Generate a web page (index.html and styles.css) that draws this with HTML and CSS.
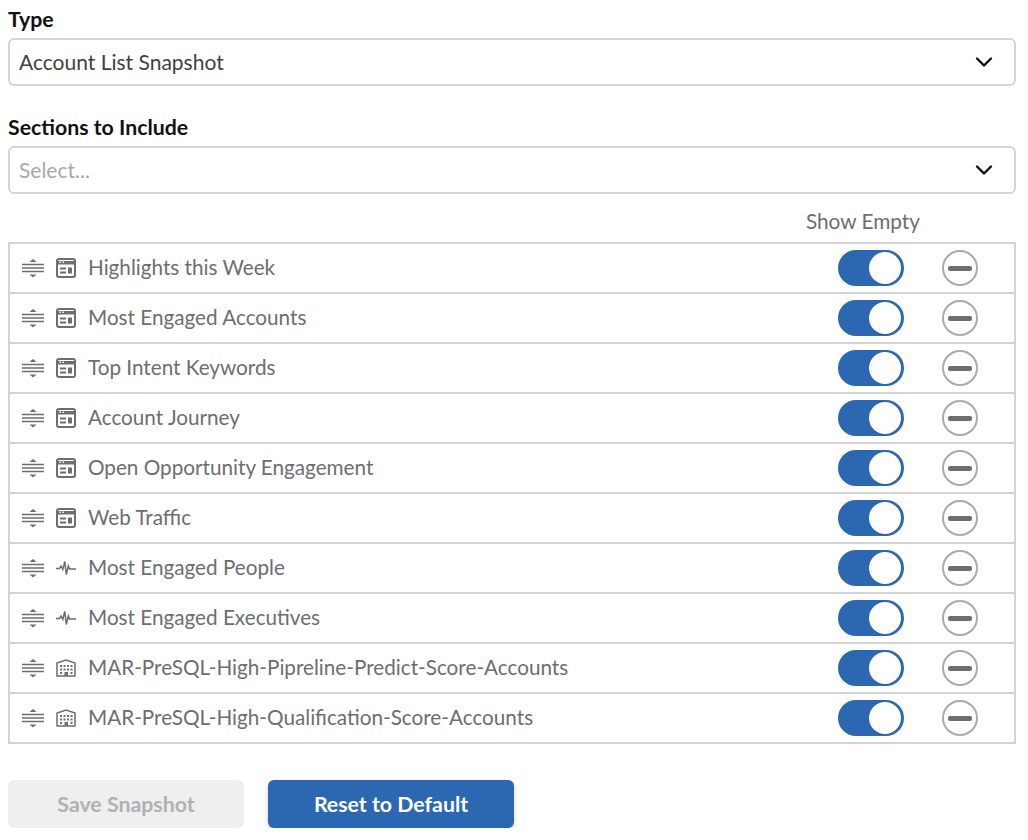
FILE: index.html
```html
<!DOCTYPE html>
<html lang="en">
<head>
  <meta charset="UTF-8">
  <title>Snapshot Settings</title>
  <link rel="stylesheet" href="styles.css">
</head>
<body>
<svg class="sprites" width="0" height="0">
  <symbol id="grip" viewBox="0 0 22 20">
    <path d="M11 1l3.500 3h-7z" fill="#6d6e71"/>
    <path d="M11 19.500l3.500-3h-7z" fill="#6d6e71"/>
    <path d="M0 6.500h22M0 10h22M0 13.500h22" stroke="#6d6e71" stroke-width="1.500" fill="none"/>
  </symbol>
  <symbol id="report" viewBox="0 0 20 20">
    <rect x="1" y="1" width="18" height="18" rx="2" fill="none" stroke="#6d6e71" stroke-width="2"/>
    <path d="M1 3h18v3.500H1z" fill="#6d6e71"/>
    <path d="M3.500 4.200h1.500M6.500 4.200h1.500" stroke="#fff" stroke-width="1.400"/>
    <path d="M4 9.500h6v2H4zM4 13.500h6v2H4zM12 9.500h4v6h-4z" fill="#6d6e71"/>
  </symbol>
  <symbol id="pulse" viewBox="0 0 20 16">
    <path d="M0 8.500h3.500l1.500-2.500 1.800 3.500 2-8 1.500 13 2-8.500 1.200 3h6.500" fill="none" stroke="#6d6e71" stroke-width="1.500"/>
  </symbol>
  <symbol id="building" viewBox="0 0 20 18">
    <path d="M1 17V4l9-3 9 3v13z" fill="none" stroke="#6d6e71" stroke-width="1.500"/>
    <path d="M4 6h2v2H4zM7.500 6h2v2h-2zM11 6h2v2h-2zM14.500 6h2v2h-2zM4 9.500h2v2H4zM7.500 9.500h2v2h-2zM11 9.500h2v2h-2zM14.500 9.500h2v2h-2zM4 13h2v2H4zM14.500 13h2v2h-2zM8.500 13h3.500v4H8.500z" fill="#6d6e71"/>
  </symbol>
  <symbol id="chevron" viewBox="0 0 18 12">
    <path d="M2 2.500l7 7 7-7" fill="none" stroke="#111" stroke-width="2.400" stroke-linecap="round" stroke-linejoin="round"/>
  </symbol>
</svg>

<div class="form">
  <label class="field-label">Type</label>
  <div class="select">
    <span class="select-value">Account List Snapshot</span>
    <svg class="chevron"><use href="#chevron"/></svg>
  </div>

  <label class="field-label second">Sections to Include</label>
  <div class="select">
    <span class="select-value placeholder">Select...</span>
    <svg class="chevron"><use href="#chevron"/></svg>
  </div>

  <div class="list-head"><span class="show-empty">Show Empty</span></div>

  <div class="section-list">
    <div class="section-row">
      <svg class="grip"><use href="#grip"/></svg>
      <svg class="type-icon"><use href="#report"/></svg>
      <span class="section-name">Highlights this Week</span>
      <span class="toggle"><span class="knob"></span></span>
      <span class="remove"><span class="remove-bar"></span></span>
    </div>
    <div class="section-row">
      <svg class="grip"><use href="#grip"/></svg>
      <svg class="type-icon"><use href="#report"/></svg>
      <span class="section-name">Most Engaged Accounts</span>
      <span class="toggle"><span class="knob"></span></span>
      <span class="remove"><span class="remove-bar"></span></span>
    </div>
    <div class="section-row">
      <svg class="grip"><use href="#grip"/></svg>
      <svg class="type-icon"><use href="#report"/></svg>
      <span class="section-name">Top Intent Keywords</span>
      <span class="toggle"><span class="knob"></span></span>
      <span class="remove"><span class="remove-bar"></span></span>
    </div>
    <div class="section-row">
      <svg class="grip"><use href="#grip"/></svg>
      <svg class="type-icon"><use href="#report"/></svg>
      <span class="section-name">Account Journey</span>
      <span class="toggle"><span class="knob"></span></span>
      <span class="remove"><span class="remove-bar"></span></span>
    </div>
    <div class="section-row">
      <svg class="grip"><use href="#grip"/></svg>
      <svg class="type-icon"><use href="#report"/></svg>
      <span class="section-name">Open Opportunity Engagement</span>
      <span class="toggle"><span class="knob"></span></span>
      <span class="remove"><span class="remove-bar"></span></span>
    </div>
    <div class="section-row">
      <svg class="grip"><use href="#grip"/></svg>
      <svg class="type-icon"><use href="#report"/></svg>
      <span class="section-name">Web Traffic</span>
      <span class="toggle"><span class="knob"></span></span>
      <span class="remove"><span class="remove-bar"></span></span>
    </div>
    <div class="section-row">
      <svg class="grip"><use href="#grip"/></svg>
      <svg class="type-icon"><use href="#pulse"/></svg>
      <span class="section-name">Most Engaged People</span>
      <span class="toggle"><span class="knob"></span></span>
      <span class="remove"><span class="remove-bar"></span></span>
    </div>
    <div class="section-row">
      <svg class="grip"><use href="#grip"/></svg>
      <svg class="type-icon"><use href="#pulse"/></svg>
      <span class="section-name">Most Engaged Executives</span>
      <span class="toggle"><span class="knob"></span></span>
      <span class="remove"><span class="remove-bar"></span></span>
    </div>
    <div class="section-row">
      <svg class="grip"><use href="#grip"/></svg>
      <svg class="type-icon"><use href="#building"/></svg>
      <span class="section-name">MAR-PreSQL-High-Pipreline-Predict-Score-Accounts</span>
      <span class="toggle"><span class="knob"></span></span>
      <span class="remove"><span class="remove-bar"></span></span>
    </div>
    <div class="section-row">
      <svg class="grip"><use href="#grip"/></svg>
      <svg class="type-icon"><use href="#building"/></svg>
      <span class="section-name">MAR-PreSQL-High-Qualification-Score-Accounts</span>
      <span class="toggle"><span class="knob"></span></span>
      <span class="remove"><span class="remove-bar"></span></span>
    </div>
  </div>

  <div class="actions">
    <button class="button button-disabled">Save Snapshot</button>
    <button class="button button-primary">Reset to Default</button>
  </div>
</div>
</body>
</html>
```

FILE: styles.css
```css
body {
  margin: 0;
  padding: 8px 12px 0 8px;
  background-color: #fff;
  font-family: Lato, "Open Sans", sans-serif;
  color: #6d6e71;
}
.sprites {
  display: block;
  height: 0;
}
.field-label {
  display: block;
  height: 24px;
  line-height: 22px;
  font-size: 21.3px;
  font-weight: 700;
  color: #111;
}
.field-label.second {
  margin-top: 30px;
}
.select {
  display: flex;
  align-items: center;
  justify-content: space-between;
  box-sizing: border-box;
  height: 48px;
  margin-top: 6px;
  padding: 0 21px 0 9px;
  border: 2px solid #d4d4d4;
  border-radius: 6px;
}
.select-value {
  padding-bottom: 2px;
  font-size: 21px;
  color: #3f4144;
}
.select-value.placeholder {
  color: #a9a9ad;
}
.chevron {
  width: 18px;
  height: 12px;
}
.list-head {
  display: flex;
  justify-content: flex-end;
  height: 48px;
  line-height: 54px;
}
.show-empty {
  margin-right: 96px;
  font-size: 20.8px;
}
.section-list {
  border: 2px solid #d4d4d4;
  border-bottom: 0;
}
.section-row {
  display: flex;
  align-items: center;
  box-sizing: border-box;
  height: 50px;
  padding-left: 12px;
  border-bottom: 2px solid #d4d4d4;
}
.grip {
  width: 22px;
  height: 20px;
}
.type-icon {
  width: 20px;
  height: 20px;
  margin-left: 12px;
}
.section-name {
  flex: 1;
  margin-left: 12px;
  padding-bottom: 3px;
  font-size: 20.7px;
}
.toggle {
  display: flex;
  align-items: center;
  justify-content: flex-end;
  box-sizing: border-box;
  width: 66px;
  height: 36px;
  padding-right: 3px;
  background-color: #2b68b1;
  border-radius: 18px;
}
.knob {
  width: 32px;
  height: 32px;
  background-color: #fff;
  border-radius: 50%;
}
.remove {
  display: flex;
  align-items: center;
  justify-content: center;
  box-sizing: border-box;
  width: 36px;
  height: 36px;
  margin-left: 38px;
  margin-right: 36px;
  border: 2px solid #aaabad;
  border-radius: 50%;
}
.remove-bar {
  width: 24px;
  height: 5px;
  background-color: #6d6e71;
  border-radius: 2px;
}
.actions {
  display: flex;
  gap: 24px;
  margin-top: 36px;
}
.button {
  height: 48px;
  padding: 0;
  border: none;
  border-radius: 6px;
  font-family: Lato, "Open Sans", sans-serif;
  font-size: 21.3px;
  font-weight: 700;
}
.button-disabled {
  width: 236px;
  background-color: #efefef;
  color: #b1b1b5;
}
.button-primary {
  width: 246px;
  background-color: #2b68b1;
  color: #fff;
  box-shadow: 0 2px 5px rgba(0, 0, 0, 0.2);
}
```
